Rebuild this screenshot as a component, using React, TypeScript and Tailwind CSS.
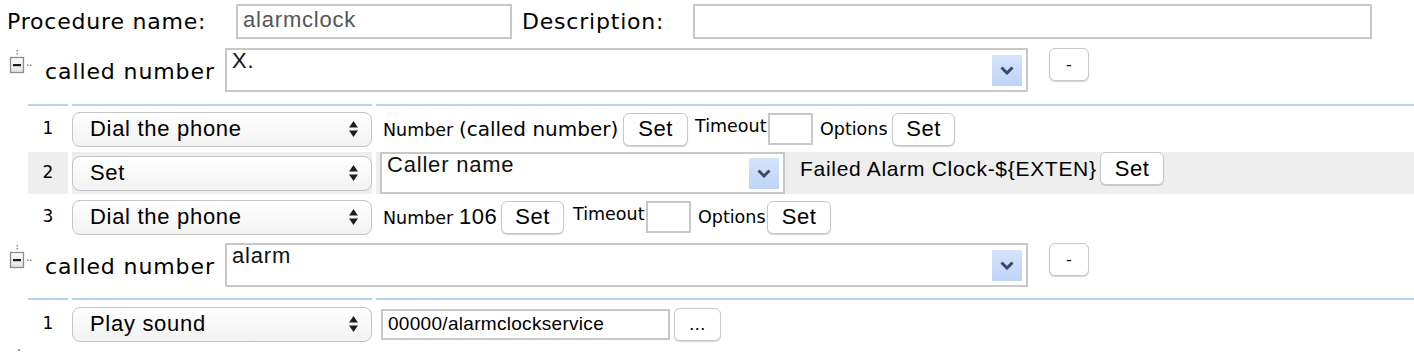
import React from "react";

const DV = "font-['DejaVu_Sans',Verdana,sans-serif]";
const LIB = "font-['Liberation_Sans',Arial,Helvetica,sans-serif]";

function TreeIcon() {
  return (
    <svg width="32" height="44" viewBox="0 0 32 44" className="ml-[4px] shrink-0">
      <rect x="12.5" y="2" width="1.5" height="1.5" fill="#8a8a8a" />
      <rect x="12.5" y="5" width="1.5" height="1.5" fill="#8a8a8a" />
      <defs>
        <linearGradient id="tg" x1="0" y1="0" x2="0" y2="1">
          <stop offset="0" stopColor="#ffffff" />
          <stop offset="1" stopColor="#e2e2e2" />
        </linearGradient>
      </defs>
      <rect x="6.5" y="9.5" width="13" height="15" fill="url(#tg)" stroke="#8c8c8c" strokeWidth="1.3" />
      <rect x="9" y="16" width="8" height="2.2" fill="#1c1c1c" />
      <rect x="23" y="16.5" width="1.5" height="1.5" fill="#8a8a8a" />
      <rect x="26" y="16.5" width="1.5" height="1.5" fill="#8a8a8a" />
    </svg>
  );
}

function Chevron() {
  return (
    <svg width="14" height="9" viewBox="0 0 14 9">
      <path d="M1.5 1.5 L7 7 L12.5 1.5" fill="none" stroke="#3a4a66" strokeWidth="3" strokeLinejoin="miter" />
    </svg>
  );
}

function Combo({ text, className }: { text: string; className: string }) {
  return (
    <div className={`flex border-2 border-[#c8c8c8] bg-white ${className}`}>
      <span className={`${LIB} flex-1 pl-[5px] text-[22px] leading-[22px] tracking-[0.8px] text-[#111]`}>{text}</span>
      <div className="mr-[4px] flex h-[31px] w-[30px] items-center justify-center self-center bg-linear-to-b from-[#d6e4fc] to-[#bed3f6]">
        <Chevron />
      </div>
    </div>
  );
}

function SetButton({ w, label = "Set", className = "" }: { w: string; label?: string; className?: string }) {
  return (
    <button
      className={`${LIB} ${w} ${className} h-[33px] shrink-0 rounded-[6px] border border-[#c8c8c8] bg-white text-[22px] leading-none tracking-[0.5px] text-black shadow-[0_1px_1px_rgba(0,0,0,0.18)]`}
    >
      {label}
    </button>
  );
}

function StepSelect({ label }: { label: string }) {
  return (
    <div className="flex h-[35px] w-full items-center justify-between rounded-[8px] border border-[#c4c4c4] bg-linear-to-b from-white to-[#f2f2f2] pl-[17px] pr-[12px]">
      <span className={`${LIB} text-[22px] leading-none tracking-[0.7px] text-black`}>{label}</span>
      <svg width="11" height="18" viewBox="0 0 11 18">
        <path d="M5.5 1 L10 7.5 H1 Z" fill="#1e1e1e" />
        <path d="M5.5 17 L10 10.5 H1 Z" fill="#1e1e1e" />
      </svg>
    </div>
  );
}

function TreeRow({ text, className }: { text: string; className: string }) {
  return (
    <div className={`flex h-[44px] items-center ${className}`}>
      <TreeIcon />
      <span className={`${DV} ml-[9px] w-[180px] shrink-0 whitespace-nowrap pt-[4px] text-[22px] leading-[26px] tracking-[0.9px]`}>
        called number
      </span>
      <Combo text={text} className="h-[44px] w-[803px] shrink-0" />
      <button className={`${DV} ml-[21px] h-[33px] w-[40px] self-start rounded-[6px] border border-[#c8c8c8] bg-white text-[16px] leading-none shadow-[0_1px_1px_rgba(0,0,0,0.18)]`}>
        -
      </button>
    </div>
  );
}

function BlueLine({ className }: { className: string }) {
  return (
    <div className={`ml-[28px] flex gap-[4px] ${className}`}>
      <div className="h-[2px] w-[40px] bg-[#b3d4eb]" />
      <div className="h-[2px] w-[300px] bg-[#b3d4eb]" />
      <div className="h-[2px] flex-1 bg-[#b3d4eb]" />
    </div>
  );
}

function StepRow({
  n,
  action,
  gray = false,
  h,
  className = "",
  children,
}: {
  n: string;
  action: string;
  gray?: boolean;
  h: string;
  className?: string;
  children: React.ReactNode;
}) {
  const bg = gray ? "bg-[#eeeeee]" : "";
  return (
    <div className={`ml-[28px] flex gap-[4px] ${h} ${className}`}>
      <div className={`${DV} flex w-[40px] shrink-0 items-center justify-center text-[17px] ${bg}`}>{n}</div>
      <div className={`flex w-[300px] shrink-0 items-center ${bg}`}>
        <StepSelect label={action} />
      </div>
      <div className={`flex flex-1 ${bg}`}>{children}</div>
    </div>
  );
}

const small = `${DV} text-[17.5px] leading-[20px] whitespace-nowrap shrink-0`;

export default function App() {
  return (
    <div className="h-[352px] w-[1414px] overflow-hidden bg-white text-black">
      {/* procedure row */}
      <div className="flex items-center pt-[4px]">
        <span className={`${DV} ml-[7px] w-[229px] shrink-0 whitespace-nowrap text-[22px] leading-[26px] tracking-[0.8px]`}>
          Procedure name:
        </span>
        <input
          readOnly
          value="alarmclock"
          className={`${LIB} h-[35px] w-[276px] shrink-0 border-2 border-[#c8c8c8] px-[5px] pb-[3px] text-[22px] tracking-[0.8px] text-[#555] outline-none`}
        />
        <span className={`${DV} ml-[10px] w-[171px] shrink-0 whitespace-nowrap text-[22px] leading-[26px] tracking-[0.8px]`}>
          Description:
        </span>
        <input readOnly value="" className="h-[35px] w-[679px] shrink-0 border-2 border-[#c8c8c8] outline-none" />
      </div>

      <TreeRow text="X." className="mt-[9px]" />
      <BlueLine className="mt-[12px]" />

      <StepRow n="1" action="Dial the phone" h="h-[40px]" className="mt-[3px]">
        <div className="flex items-center pl-[7px]">
          <span className={`${small} w-[240px]`}>
            Number <span className="text-[20px]">(called number)</span>
          </span>
          <SetButton w="w-[65px]" />
          <span className={`${small} ml-[7px] w-[73px] pb-[6px]`}>Timeout</span>
          <div className="h-[32px] w-[45px] shrink-0 border-2 border-[#c8c8c8] bg-white" />
          <span className={`${small} ml-[7px] w-[72px]`}>Options</span>
          <SetButton w="w-[63px]" />
        </div>
      </StepRow>

      <StepRow n="2" action="Set" gray h="h-[42px]" className="mt-[3px]">
        <div className="flex items-start pl-[4px]">
          <Combo text="Caller name" className="h-[42px] w-[405px] shrink-0" />
          <span className={`${LIB} ml-[15px] mt-[5px] w-[300px] shrink-0 whitespace-nowrap text-[21px] leading-[24px] tracking-[0.7px]`}>
            {"Failed Alarm Clock-${EXTEN}"}
          </span>
          <SetButton w="w-[64px]" />
        </div>
      </StepRow>

      <StepRow n="3" action="Dial the phone" h="h-[40px]" className="mt-[3px]">
        <div className="flex items-center pl-[7px]">
          <span className={`${small} w-[118px]`}>
            Number <span className={`${LIB} text-[22px] tracking-[0.6px]`}>106</span>
          </span>
          <SetButton w="w-[63px]" />
          <span className={`${small} ml-[9px] w-[73px] pb-[6px]`}>Timeout</span>
          <div className="h-[32px] w-[45px] shrink-0 border-2 border-[#c8c8c8] bg-white" />
          <span className={`${small} ml-[7px] w-[69px]`}>Options</span>
          <SetButton w="w-[64px]" />
        </div>
      </StepRow>

      <TreeRow text="alarm" className="mt-[6px]" />
      <BlueLine className="mt-[11px]" />

      <StepRow n="1" action="Play sound" h="h-[40px]" className="mt-[4px]">
        <div className="flex items-center pl-[5px]">
          <input
            readOnly
            value="00000/alarmclockservice"
            className={`${LIB} h-[31px] w-[289px] shrink-0 border-2 border-[#c8c8c8] px-[5px] text-[19px] tracking-[0.3px] text-black outline-none`}
          />
          <SetButton w="w-[47px]" label="..." className="ml-[4px] !text-[18px]" />
        </div>
      </StepRow>

      <div className="ml-[18px] mt-[5px] h-[2px] w-[2px] bg-[#999]" />
    </div>
  );
}
